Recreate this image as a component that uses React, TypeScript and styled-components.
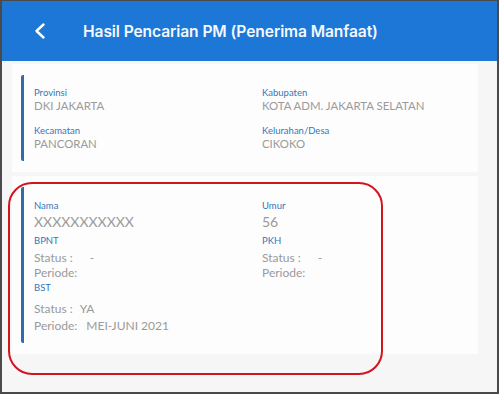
import React from "react";
import styled, { createGlobalStyle } from "styled-components";

const Global = createGlobalStyle`
  html, body { margin: 0; padding: 0; background: #ffffff; }
  * { box-sizing: border-box; }
`;

const Frame = styled.div`
  position: relative;
  width: 499px;
  height: 394px;
  border: 2px solid #4a4a4a;
  border-top-width: 1px;
  background: #f6f6f6;
  overflow: hidden;
  font-family: "Lato", "Liberation Sans", sans-serif;
`;

const Header = styled.div`
  height: 60px;
  background: #1c77d6;
  display: flex;
  align-items: center;
  padding-left: 31px;
  gap: 36px;
`;

const BackIcon = styled.svg`
  width: 14px;
  height: 18px;
  flex: none;
`;

const Title = styled.div`
  color: #f4f8ff;
  font-family: "Inter", "Noto Sans", sans-serif;
  font-weight: 600;
  font-size: 15.6px;
  letter-spacing: -0.1px;
`;

const Content = styled.div`
  display: flex;
  flex-direction: column;
  gap: 4px;
  padding: 3px 19px 0 10px;
`;

const Card = styled.div`
  background: #fdfdfd;
  padding: 11px 0 11px 9px;
`;

const Section = styled.div<{ $pt: number; $pb: number }>`
  border-left: 3px solid #2e6cae;
  border-radius: 2px;
  padding: ${(p) => p.$pt}px 0 ${(p) => p.$pb}px 10px;
  display: grid;
  grid-template-columns: 228px 1fr;
`;

const Col = styled.div`
  display: flex;
  flex-direction: column;
`;

const Label = styled.div<{ $mt?: number }>`
  color: #3577b8;
  font-size: 9.5px;
  line-height: 11px;
  margin-top: ${(p) => p.$mt ?? 0}px;
`;

const Value = styled.div<{ $big?: boolean }>`
  color: #9a9a9a;
  font-size: ${(p) => (p.$big ? "14px" : "11.4px")};
  line-height: ${(p) => (p.$big ? "18px" : "16px")};
  margin-top: ${(p) => (p.$big ? "2.5px" : "0")};
`;

const Line = styled.div<{ $mt?: number }>`
  display: flex;
  color: #9a9a9a;
  font-size: 12px;
  line-height: 15px;
  white-space: nowrap;
  margin-top: ${(p) => p.$mt ?? 0}px;
`;

const Key = styled.span``;

const Val = styled.span<{ $ml: number }>`
  margin-left: ${(p) => p.$ml}px;
`;

const Highlight = styled.div`
  position: absolute;
  left: 6px;
  top: 181px;
  width: 375px;
  height: 193px;
  border: 2px solid #d2141f;
  border-radius: 24px;
  pointer-events: none;
`;

export default function App() {
  return (
    <>
      <Global />
      <Frame>
        <Header>
          <BackIcon viewBox="0 0 14 18">
            <path d="M10.5 2.5 L3.5 9 L10.5 15.5" fill="none" stroke="#ffffff" strokeWidth="2.4" strokeLinecap="round" strokeLinejoin="round" />
          </BackIcon>
          <Title>Hasil Pencarian PM (Penerima Manfaat)</Title>
        </Header>
        <Content>
          <Card>
            <Section $pt={11.5} $pb={9.5}>
              <Col>
                <Label>Provinsi</Label>
                <Value>DKI JAKARTA</Value>
                <Label $mt={11}>Kecamatan</Label>
                <Value>PANCORAN</Value>
              </Col>
              <Col>
                <Label>Kabupaten</Label>
                <Value>KOTA ADM. JAKARTA SELATAN</Value>
                <Label $mt={11}>Kelurahan/Desa</Label>
                <Value>CIKOKO</Value>
              </Col>
            </Section>
          </Card>
          <Card>
            <Section $pt={12.5} $pb={10.5}>
              <Col>
                <Label>Nama</Label>
                <Value $big>XXXXXXXXXXX</Value>
                <Label $mt={3.5}>BPNT</Label>
                <Line $mt={4}><Key>Status :</Key><Val $ml={17}>-</Val></Line>
                <Line><Key>Periode:</Key></Line>
                <Label $mt={2}>BST</Label>
                <Line $mt={8}><Key>Status :</Key><Val $ml={7}>YA</Val></Line>
                <Line $mt={2}><Key>Periode:</Key><Val $ml={9}>MEI-JUNI 2021</Val></Line>
              </Col>
              <Col>
                <Label>Umur</Label>
                <Value $big>56</Value>
                <Label $mt={3.5}>PKH</Label>
                <Line $mt={4}><Key>Status :</Key><Val $ml={17}>-</Val></Line>
                <Line><Key>Periode:</Key></Line>
              </Col>
            </Section>
          </Card>
        </Content>
        <Highlight />
      </Frame>
    </>
  );
}
